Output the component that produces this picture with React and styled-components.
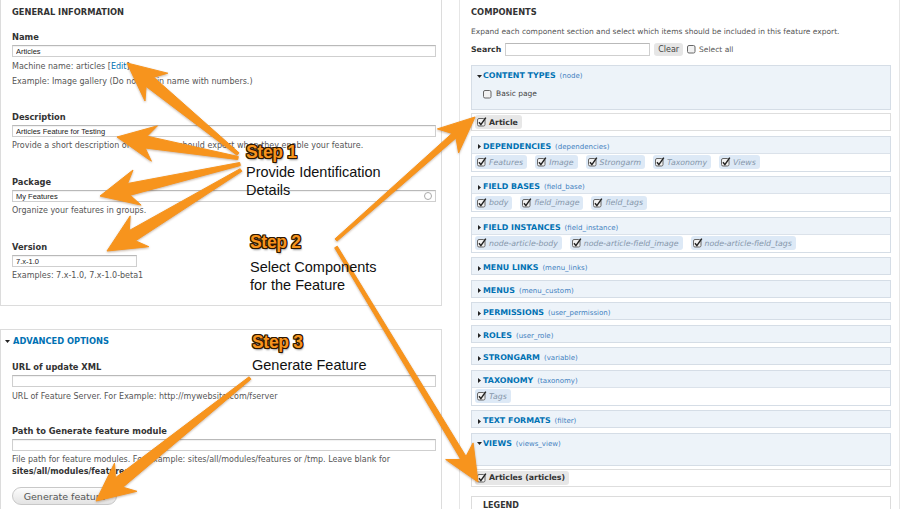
import styled, { createGlobalStyle } from "styled-components";

const UI_FONT = `"Lucida Grande", "DejaVu Sans", Verdana, sans-serif`;
const BLUE = "#0071b3";
const ORANGE = "#f7941d";

const GlobalStyle = createGlobalStyle`
  html, body {
    margin: 0;
    padding: 0;
    background: #fff;
  }
  body {
    width: 900px;
    height: 509px;
    overflow: hidden;
  }
`;

const Page = styled.div`
  position: relative;
  width: 900px;
  height: 509px;
  overflow: hidden;
  display: grid;
  grid-template-columns: 442px 441px;
  column-gap: 17px;
  font-family: ${UI_FONT};
  color: #333;
  background: #fff;
`;

const Column = styled.div`
  display: flex;
  flex-direction: column;
  gap: 23px;
  margin-top: -3px;
`;

const Fieldset = styled.section`
  border: 1px solid ${(p) => (p.$faint ? "#e6e6e6" : "#dcdcdc")};
  padding: ${(p) => p.$pad || "8px 5px 22px 11px"};
  background: #fff;
`;

const Title = styled.div`
  font-size: 8.3px;
  font-weight: bold;
  text-transform: uppercase;
  line-height: 12px;
  color: ${(p) => (p.$link ? BLUE : "#333")};
  margin-bottom: ${(p) => p.$mb || "13px"};
  display: flex;
  align-items: center;
  gap: 3px;
  margin-left: ${(p) => (p.$link ? "-7px" : "0")};
`;

const FormItem = styled.div`
  margin-bottom: ${(p) => p.$mb || "23px"};
  &:last-child {
    margin-bottom: 0;
  }
`;

const Label = styled.div`
  font-size: 8.3px;
  font-weight: bold;
  line-height: 12px;
  color: #333;
`;

const InputWrap = styled.div`
  position: relative;
  margin-top: 2px;
  width: ${(p) => p.$width || "100%"};
`;

const TextInput = styled.input`
  display: block;
  box-sizing: border-box;
  width: 100%;
  height: 12px;
  margin: 0;
  padding: 0 3px;
  border: 1px solid #cfcfcf;
  border-top-color: #b9b9b9;
  box-shadow: inset 0 1px 1px rgba(0, 0, 0, 0.06);
  font-family: "Liberation Sans", Arial, sans-serif;
  font-size: 7.5px;
  color: #222;
  background: #fff;
  outline: none;
`;

const Throbber = styled.span`
  position: absolute;
  right: 4px;
  top: 2px;
  width: 6px;
  height: 6px;
  border: 1px solid #aaa;
  border-radius: 50%;
`;

const Description = styled.div`
  margin-top: ${(p) => p.$mt || "2px"};
  font-size: 8px;
  line-height: ${(p) => p.$lh || "14px"};
  color: #555;
  b {
    color: #333;
  }
  a {
    color: ${BLUE};
    text-decoration: none;
  }
`;

const Button = styled.button`
  display: block;
  margin-top: ${(p) => p.$mt || "8px"};
  height: 18px;
  width: 105px;
  border: 1px solid #c8c8c8;
  border-radius: 10px;
  background: linear-gradient(#fdfdfd, #e3e3e3);
  font-family: ${UI_FONT};
  font-size: 9.5px;
  color: #555;
  padding: 0;
`;

/* ---------- right column ---------- */

const Intro = styled.div`
  font-size: 7.5px;
  line-height: 12px;
  color: #555;
  margin-top: -5px;
  white-space: nowrap;
`;

const SearchRow = styled.div`
  display: flex;
  align-items: center;
  gap: 4px;
  height: 14px;
  margin: 4px 0 9px;
  font-size: 8px;
`;

const SearchLabel = styled.span`
  font-weight: bold;
  font-size: 7.8px;
  color: #333;
`;

const SearchInput = styled.input`
  box-sizing: border-box;
  width: 145px;
  height: 13px;
  margin: 0;
  border: 1px solid #cfcfcf;
  border-top-color: #b9b9b9;
`;

const ClearButton = styled.span`
  display: inline-flex;
  align-items: center;
  height: 13px;
  padding: 0 4px;
  background: #e6e6e6;
  border-radius: 3px;
  color: #444;
  font-size: 8px;
`;

const SelectAll = styled.span`
  display: inline-flex;
  align-items: center;
  gap: 2px;
  color: #555;
  font-size: 7.5px;
`;

const ComponentList = styled.div`
  display: flex;
  flex-direction: column;
  gap: 4.5px;
`;

const Box = styled.div`
  border: 1px solid #d5dde6;
  background: #edf3f9;
`;

const BoxHeader = styled.div`
  display: flex;
  align-items: center;
  gap: 1px;
  padding: 4px 0 0 5px;
  line-height: 12px;
  white-space: nowrap;
`;

const BoxName = styled.span`
  font-size: 7.9px;
  font-weight: bold;
  color: ${BLUE};
  text-transform: uppercase;
`;

const BoxKey = styled.span`
  font-size: 7px;
  color: #3f7fbf;
  margin-left: 3px;
`;

const BoxBody = styled.div`
  padding: ${(p) => p.$pad || "6px 0 9px 11px"};
  height: ${(p) => p.$h || "auto"};
  box-sizing: border-box;
  display: flex;
  align-items: center;
  gap: 3px;
  font-size: 7.5px;
  color: #444;
  line-height: 12px;
`;

const ExportList = styled.div`
  display: flex;
  align-items: center;
  gap: 8px;
  padding: 1.5px 3px;
  background: #fff;
  border-top: 1px solid #dbe2ea;
`;

const SelectedList = styled(ExportList)`
  border: 1px solid #dedede;
  margin-top: 3px;
  padding: 1px 3px;
`;

const Pill = styled.span`
  display: inline-flex;
  align-items: center;
  gap: 2px;
  height: 14px;
  padding: 0 4px 0 2px;
  border-radius: 3px;
  font-size: 7.8px;
  font-weight: ${(p) => (p.$selected ? "bold" : "normal")};
  font-style: ${(p) => (p.$selected ? "normal" : "italic")};
  color: ${(p) => (p.$selected ? "#333" : "#8596aa")};
  background: ${(p) => (p.$selected ? "#e7e7e7" : "#dde9f6")};
  white-space: nowrap;
`;

const LegendBox = styled.div`
  margin-top: 9px;
  border: 1px solid #dcdcdc;
  padding: 3px 11px 20px;
  font-size: 8px;
  font-weight: bold;
  line-height: 12px;
  color: #333;
`;

/* ---------- annotations ---------- */

const ArrowLayer = styled.svg`
  position: absolute;
  left: 0;
  top: 0;
  width: 900px;
  height: 509px;
  pointer-events: none;
  z-index: 2;
  filter: drop-shadow(0 1px 1px rgba(90, 40, 0, 0.35));
`;

const Callout = styled.div`
  position: absolute;
  left: ${(p) => p.$x}px;
  top: ${(p) => p.$y}px;
  z-index: 3;
  font-family: "Liberation Sans", Arial, sans-serif;
  white-space: nowrap;
`;

const StepLabel = styled.div`
  font-size: 17.5px;
  font-weight: bold;
  line-height: 20px;
  color: ${ORANGE};
  letter-spacing: -0.3px;
  text-shadow: -1px -1px 0 #2d1700, 1px -1px 0 #2d1700, -1px 1px 0 #2d1700,
    1px 1px 0 #2d1700, 0 -1px 0 #2d1700, 0 1px 0 #2d1700, -1px 0 0 #2d1700,
    1px 0 0 #2d1700, 1px 2px 2px rgba(0, 0, 0, 0.45);
`;

const StepText = styled.div`
  margin-top: ${(p) => p.$gap}px;
  font-size: 14.5px;
  line-height: 18px;
  color: #111;
`;

function CheckBox({ checked }) {
  return (
    <svg width="10" height="10" viewBox="0 0 10 10" style={{ flex: "none" }}>
      <rect
        x="0.5"
        y="1.5"
        width="7.5"
        height="7.5"
        rx="1.5"
        fill="#f2f2f2"
        stroke="#666"
      />
      {checked && (
        <path
          d="M2 5.2 L3.9 7.6 L8.8 0.6"
          stroke="#222"
          strokeWidth="1.5"
          fill="none"
        />
      )}
    </svg>
  );
}

function Caret({ open }) {
  return (
    <svg width="5" height="5" viewBox="0 0 5 5" style={{ flex: "none" }}>
      {open ? (
        <polygon points="0,1 5,1 2.5,4" fill="#222" />
      ) : (
        <polygon points="1,0 4,2.5 1,5" fill="#222" />
      )}
    </svg>
  );
}

function arrowPoints(tail, tip, o) {
  const [tx, ty] = tail;
  const [px, py] = tip;
  const dx = px - tx;
  const dy = py - ty;
  const len = Math.hypot(dx, dy);
  const ux = dx / len;
  const uy = dy / len;
  const nx = -uy;
  const ny = ux;
  const neck = [px - ux * o.head * 0.78, py - uy * o.head * 0.78];
  const base = [px - ux * o.head, py - uy * o.head];
  const pts = [
    [tx + (nx * o.w0) / 2, ty + (ny * o.w0) / 2],
    [neck[0] + (nx * o.w1) / 2, neck[1] + (ny * o.w1) / 2],
    [base[0] + nx * o.half, base[1] + ny * o.half],
    [px, py],
    [base[0] - nx * o.half, base[1] - ny * o.half],
    [neck[0] - (nx * o.w1) / 2, neck[1] - (ny * o.w1) / 2],
    [tx - (nx * o.w0) / 2, ty - (ny * o.w0) / 2],
  ];
  return pts.map((p) => p.map((v) => v.toFixed(1)).join(",")).join(" ");
}

const thick = { head: 38, half: 18, w0: 3, w1: 12 };
const thin = { head: 36, half: 16, w0: 3, w1: 6 };

const arrows = [
  { tail: [238, 154], tip: [127, 63], o: thick },
  { tail: [238, 158], tip: [117, 137], o: thick },
  { tail: [240, 164], tip: [100, 196], o: thick },
  { tail: [241, 170], tip: [107, 251], o: thick },
  { tail: [336, 240], tip: [475, 117], o: thin },
  { tail: [336, 247], tip: [478, 482], o: thin },
  { tail: [250, 378], tip: [96, 501], o: thick },
];

const components = [
  {
    name: "Content types",
    key: "node",
    open: true,
    body: "Basic page",
    selected: ["Article"],
  },
  {
    name: "Dependencies",
    key: "dependencies",
    items: ["Features", "Image", "Strongarm", "Taxonomy", "Views"],
  },
  { name: "Field bases", key: "field_base", items: ["body", "field_image", "field_tags"] },
  {
    name: "Field instances",
    key: "field_instance",
    items: ["node-article-body", "node-article-field_image", "node-article-field_tags"],
  },
  { name: "Menu links", key: "menu_links" },
  { name: "Menus", key: "menu_custom" },
  { name: "Permissions", key: "user_permission" },
  { name: "Roles", key: "user_role" },
  { name: "Strongarm", key: "variable" },
  { name: "Taxonomy", key: "taxonomy", items: ["Tags"] },
  { name: "Text formats", key: "filter" },
  { name: "Views", key: "views_view", open: true, selected: ["Articles (articles)"] },
];

function ComponentGroup({ c }) {
  return (
    <div>
      <Box>
        <BoxHeader>
          <Caret open={c.open} />
          <BoxName>{c.name}</BoxName>
          <BoxKey>({c.key})</BoxKey>
        </BoxHeader>
        {c.open &&
          (c.body ? (
            <BoxBody>
              <CheckBox />
              {c.body}
            </BoxBody>
          ) : (
            <BoxBody $h="14px" />
          ))}
        {c.items && (
          <ExportList>
            {c.items.map((it) => (
              <Pill key={it}>
                <CheckBox checked />
                {it}
              </Pill>
            ))}
          </ExportList>
        )}
      </Box>
      {c.selected && (
        <SelectedList>
          {c.selected.map((it) => (
            <Pill key={it} $selected>
              <CheckBox checked />
              {it}
            </Pill>
          ))}
        </SelectedList>
      )}
    </div>
  );
}

export default function App() {
  return (
    <>
      <GlobalStyle />
      <Page>
        <Column>
          <Fieldset>
            <Title>General information</Title>
            <FormItem $mb="22px">
              <Label>Name</Label>
              <InputWrap>
                <TextInput readOnly value="Articles" />
              </InputWrap>
              <Description $lh="15px">
                Machine name: articles [<a href="#edit">Edit</a>]
                <br />
                Example: Image gallery (Do not begin name with numbers.)
              </Description>
            </FormItem>
            <FormItem>
              <Label>Description</Label>
              <InputWrap>
                <TextInput readOnly value="Articles Feature for Testing" />
              </InputWrap>
              <Description>
                Provide a short description of what users should expect when
                they enable your feature.
              </Description>
            </FormItem>
            <FormItem>
              <Label>Package</Label>
              <InputWrap>
                <TextInput readOnly value="My Features" />
                <Throbber />
              </InputWrap>
              <Description>Organize your features in groups.</Description>
            </FormItem>
            <FormItem>
              <Label>Version</Label>
              <InputWrap $width="125px">
                <TextInput readOnly value="7.x-1.0" />
              </InputWrap>
              <Description>Examples: 7.x-1.0, 7.x-1.0-beta1</Description>
            </FormItem>
          </Fieldset>

          <Fieldset $pad="5px 5px 20px 11px">
            <Title $link $mb="14px">
              <Caret open />
              Advanced options
            </Title>
            <FormItem $mb="21px">
              <Label>URL of update XML</Label>
              <InputWrap>
                <TextInput readOnly value="" />
              </InputWrap>
              <Description $mt="3px">
                URL of Feature Server. For Example:
                http://mywebsite.com/fserver
              </Description>
            </FormItem>
            <FormItem>
              <Label>Path to Generate feature module</Label>
              <InputWrap>
                <TextInput readOnly value="" />
              </InputWrap>
              <Description $lh="12px" $mt="3px">
                File path for feature modules. For Example:
                sites/all/modules/features or /tmp. Leave blank for{" "}
                <b>sites/all/modules/features</b>.
              </Description>
              <Button $mt="9px">Generate feature</Button>
            </FormItem>
          </Fieldset>
        </Column>

        <Column>
          <Fieldset $faint $pad="8px 8px 20px 11px">
            <Title>Components</Title>
            <Intro>
              Expand each component section and select which items should be
              included in this feature export.
            </Intro>
            <SearchRow>
              <SearchLabel>Search</SearchLabel>
              <SearchInput readOnly />
              <ClearButton>Clear</ClearButton>
              <SelectAll>
                <CheckBox />
                Select all
              </SelectAll>
            </SearchRow>
            <ComponentList>
              {components.map((c) => (
                <ComponentGroup key={c.key} c={c} />
              ))}
            </ComponentList>
            <LegendBox>LEGEND</LegendBox>
          </Fieldset>
        </Column>

        <ArrowLayer viewBox="0 0 900 509">
          {arrows.map((a, i) => (
            <polygon
              key={i}
              points={arrowPoints(a.tail, a.tip, a.o)}
              fill={ORANGE}
              stroke={ORANGE}
              strokeWidth="1"
              strokeLinejoin="round"
            />
          ))}
        </ArrowLayer>

        <Callout $x={246} $y={142}>
          <StepLabel>Step 1</StepLabel>
          <StepText $gap={1}>
            Provide Identification
            <br />
            Details
          </StepText>
        </Callout>
        <Callout $x={250} $y={232}>
          <StepLabel>Step 2</StepLabel>
          <StepText $gap={6}>
            Select Components
            <br />
            for the Feature
          </StepText>
        </Callout>
        <Callout $x={252} $y={332}>
          <StepLabel>Step 3</StepLabel>
          <StepText $gap={4}>Generate Feature</StepText>
        </Callout>
      </Page>
    </>
  );
}
